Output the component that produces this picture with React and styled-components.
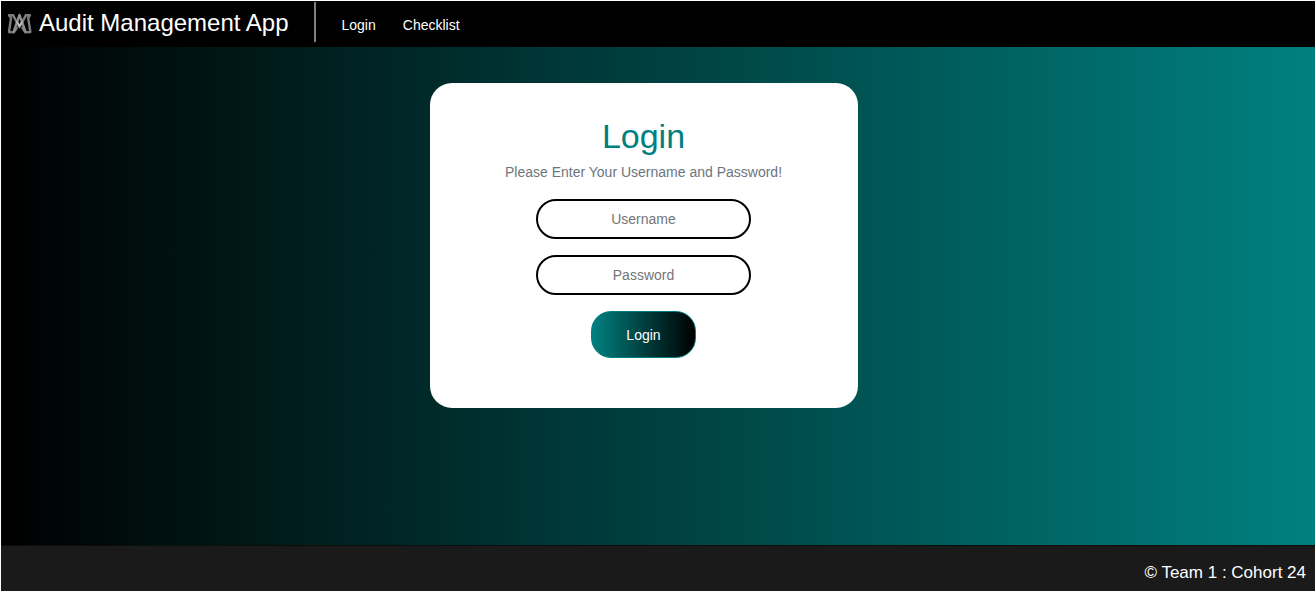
import React from "react";
import styled, { createGlobalStyle } from "styled-components";

const GlobalStyle = createGlobalStyle`
  *, *::before, *::after { box-sizing: border-box; }
  body {
    margin: 0;
    background: #fff;
    font-family: "Liberation Sans", Arial, sans-serif;
    font-size: 14px;
    line-height: 20px;
  }
`;

const Page = styled.div`
  min-height: 100vh;
  padding: 1px;
  display: flex;
  flex-direction: column;
`;

const Navbar = styled.header`
  display: flex;
  align-items: flex-start;
  min-height: 46px;
  padding: 1px 6px;
  background: #000;
`;

const Brand = styled.a`
  display: flex;
  align-items: center;
  gap: 6px;
  height: 40px;
  padding: 2px 25px 0 0;
  border-right: 2px solid #808080;
  color: #fff;
  font-size: 24px;
  line-height: 38px;
  text-decoration: none;
  white-space: nowrap;
`;

const Logo = styled.svg`
  width: 26px;
  height: 24px;
  flex: none;
`;

const NavLinks = styled.nav`
  display: flex;
  gap: 27px;
  padding: 13px 26px 0;
`;

const NavLink = styled.a`
  color: #fff;
  text-decoration: none;
`;

const Main = styled.main`
  flex: 1;
  display: flex;
  justify-content: center;
  align-items: flex-start;
  padding: 36px 29px 36px 0;
  background: linear-gradient(to right, #000, #008080);
`;

const Card = styled.form`
  display: flex;
  flex-direction: column;
  align-items: center;
  width: 100%;
  max-width: 428px;
  padding: 33px 16px 50px;
  border-radius: 22px;
  background: #fff;
`;

const Title = styled.h1`
  margin: 0 0 6px;
  color: #008080;
  font-size: 34px;
  font-weight: 400;
  line-height: 40px;
`;

const Hint = styled.p`
  margin: 0 0 17px;
  color: #6c757d;
  text-align: center;
`;

const Field = styled.input`
  width: 215px;
  max-width: 100%;
  height: 40px;
  margin-bottom: 16px;
  padding: 0 16px;
  border: 2px solid #000;
  border-radius: 20px;
  background: none;
  color: #000;
  font: inherit;
  text-align: center;
  outline: none;

  &::placeholder { color: #757575; opacity: 1; }
  &:focus { border-color: #008080; }
`;

const SubmitButton = styled.button`
  width: 105px;
  height: 47px;
  padding: 0;
  border: 1px solid #008080;
  border-radius: 20px;
  background: linear-gradient(to right, #008080, #000);
  color: #fff;
  font: inherit;
  cursor: pointer;
`;

const Footer = styled.footer`
  min-height: 46px;
  padding: 16px 9px 6px;
  border-top: 1px solid #0d0d0d;
  background: #1a1a1a;
  color: #fff;
  font-size: 17px;
  line-height: 22px;
  text-align: right;
`;

export default function App() {
  return (
    <>
      <GlobalStyle />
      <Page>
        <Navbar>
          <Brand href="#home">
            <Logo viewBox="0 0 26 24" fill="none" aria-hidden="true">
              <g strokeLinejoin="round" strokeLinecap="round" strokeWidth="2.4">
                <path
                  d="M6 4.2H2L4 7L2 21L6.8 21.2L9.8 17M19 4.2H23L21.2 7L23.4 21L18.4 21.2L15.4 17"
                  stroke="#7c7c7c"
                />
                <path d="M6 4.2L12.5 16L19 4.2" stroke="#808080" />
                <path d="M6.8 20.5L12.5 4L18.4 20.5" stroke="#8c8c8c" />
                <path d="M10 11L12.5 15L15 11" stroke="#b8b8b8" strokeWidth="2" />
              </g>
            </Logo>
            Audit Management App
          </Brand>
          <NavLinks>
            <NavLink href="#login">Login</NavLink>
            <NavLink href="#checklist">Checklist</NavLink>
          </NavLinks>
        </Navbar>
        <Main>
          <Card onSubmit={(event) => event.preventDefault()}>
            <Title>Login</Title>
            <Hint>Please Enter Your Username and Password!</Hint>
            <Field type="text" name="username" placeholder="Username" aria-label="Username" />
            <Field type="password" name="password" placeholder="Password" aria-label="Password" />
            <SubmitButton type="submit">Login</SubmitButton>
          </Card>
        </Main>
        <Footer>© Team 1 : Cohort 24</Footer>
      </Page>
    </>
  );
}
